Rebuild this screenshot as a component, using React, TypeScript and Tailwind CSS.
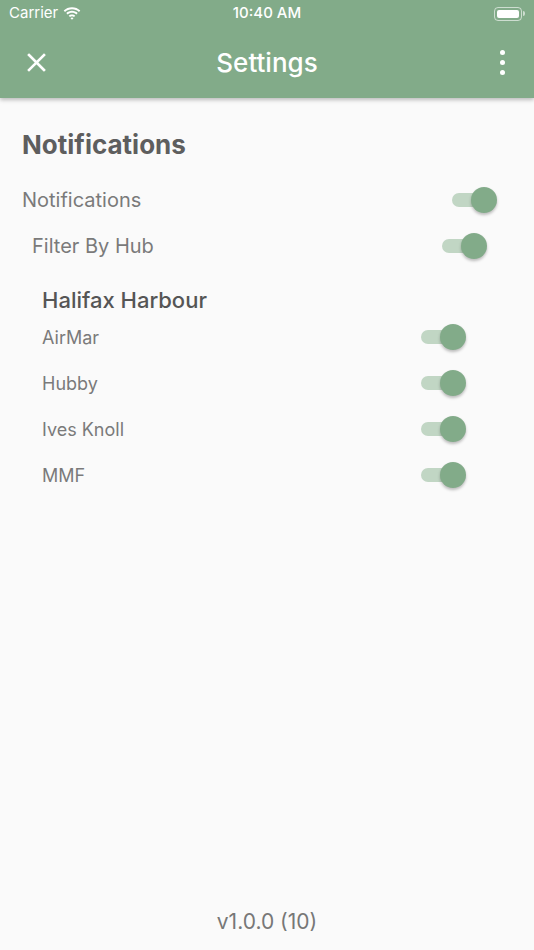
import React from 'react'

const font = { fontFamily: 'Inter, "Noto Sans", sans-serif' }

const Switch: React.FC = () => (
  <div className="relative h-[26px] w-[45px] shrink-0">
    <div className="absolute left-0 top-1/2 h-[14px] w-[38px] -translate-y-1/2 rounded-full bg-[#c1d6c4]" />
    <div className="absolute right-0 top-0 h-[26px] w-[26px] rounded-full bg-[#82ab89] shadow-[0_2px_3px_rgba(0,0,0,0.25)]" />
  </div>
)

const StatusBar: React.FC = () => (
  <div className="relative flex h-[27px] items-center px-[9px] text-[15px] text-white">
    <div className="flex items-center gap-[5px]">
      <span>Carrier</span>
      <svg width="18" height="13" viewBox="0 0 18 13" fill="white">
        <path d="M9 2.2c2.7 0 5.2 1 7 2.8l1.3-1.4C15.1 1.4 12.2.2 9 .2S2.9 1.4.7 3.6L2 5c1.8-1.8 4.3-2.8 7-2.8z" />
        <path d="M9 5.8c1.7 0 3.2.6 4.4 1.7l1.3-1.4C13.2 4.7 11.2 3.8 9 3.8s-4.2.9-5.7 2.3l1.3 1.4C5.8 6.4 7.3 5.8 9 5.8z" />
        <path d="M9 9.3c.8 0 1.5.3 2 .8l1.3-1.4C11.4 7.9 10.3 7.4 9 7.4s-2.4.5-3.3 1.3L7 10.1c.5-.5 1.2-.8 2-.8zM9 12.8l1.6-1.7c-.4-.4-1-.6-1.6-.6s-1.200.2-1.6.6z" />
      </svg>
    </div>
    <span className="absolute left-1/2 -translate-x-1/2 font-medium">10:40 AM</span>
    <div className="ml-auto flex items-center">
      <div className="h-[14px] w-[28px] rounded-[4px] border border-white/60 p-[2px]">
        <div className="h-full w-full rounded-[2px] bg-white" />
      </div>
      <div className="ml-[1px] h-[5px] w-[2px] rounded-r-sm bg-white/60" />
    </div>
  </div>
)

const Row: React.FC<{ label: string; className?: string; textClass?: string }> = ({
  label,
  className = '',
  textClass = ''
}) => (
  <div className={`flex h-[46px] items-center justify-between ${className}`}>
    <span className={textClass}>{label}</span>
    <Switch />
  </div>
)

export default function App() {
  const hubs = ['AirMar', 'Hubby', 'Ives Knoll', 'MMF']

  return (
    <div className="flex h-[950px] w-full flex-col bg-[#fafafa]" style={font}>
      <div className="relative z-10 bg-[#82ab89] shadow-[0_2px_4px_rgba(0,0,0,0.25)]">
        <StatusBar />
        <div className="relative flex h-[71px] items-center px-[27px]">
          <svg width="19" height="19" viewBox="0 0 19 19" stroke="white" strokeWidth="2.6" strokeLinecap="square">
            <path d="M2 2l15 15M17 2L2 17" />
          </svg>
          <span className="absolute left-1/2 -translate-x-1/2 text-[26px] font-medium text-white">Settings</span>
          <div className="ml-auto mr-[2px] flex flex-col gap-[5px]">
            <div className="h-[5px] w-[5px] rounded-full bg-white" />
            <div className="h-[5px] w-[5px] rounded-full bg-white" />
            <div className="h-[5px] w-[5px] rounded-full bg-white" />
          </div>
        </div>
      </div>

      <div className="flex flex-1 flex-col px-[22px] pt-[32px]">
        <h1 className="h-[30px] text-[26px] font-bold leading-[30px] text-[#5e5e5e]">Notifications</h1>
        <Row label="Notifications" className="mt-[17px] pr-[15px]" textClass="text-[20px] text-[#7a7a7a]" />
        <Row label="Filter By Hub" className="pl-[10px] pr-[25px]" textClass="text-[20px] text-[#7a7a7a]" />
        <div className="mt-[17px] pl-[20px] pr-[46px]">
          <div className="h-[28px] text-[22px] font-medium leading-[28px] text-[#555555]">Halifax Harbour</div>
          {hubs.map((h) => (
            <Row key={h} label={h} textClass="text-[18px] text-[#7a7a7a]" />
          ))}
        </div>
        <div className="mt-auto pb-[13px] text-center text-[21px] text-[#777777]">v1.0.0 (10)</div>
      </div>
    </div>
  )
}
